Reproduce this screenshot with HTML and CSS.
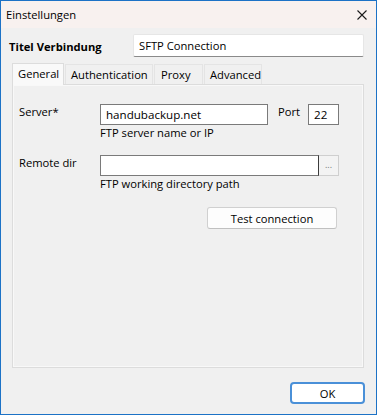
FILE: index.html
```html
<!DOCTYPE html>
<html>
<head>
<meta charset="utf-8">
<link rel="stylesheet" href="styles.css">
</head>
<body>
<div class="window">
  <div class="titlebar">
    <span class="title">Einstellungen</span>
    <svg class="close" width="10" height="10" viewBox="0 0 10 10"><path d="M0.5 0.5 L9.5 9.5 M9.5 0.5 L0.5 9.5" stroke="#1a1a1a" stroke-width="1.1" fill="none"/></svg>
  </div>
  <div class="content">
    <div class="name-row">
      <span class="name-label">Titel Verbindung</span>
      <div class="name-input">SFTP Connection</div>
    </div>
    <div class="tabs">
      <div class="tab active">General</div>
      <div class="tab">Authentication</div>
      <div class="tab">Proxy</div>
      <div class="tab">Advanced</div>
    </div>
    <div class="panel">
      <div class="form">
        <span class="label">Server*</span>
        <div class="field">
          <div class="inline">
            <div class="input server">handubackup.net</div>
            <span class="label port-label">Port</span>
            <div class="input port">22</div>
          </div>
          <div class="hint">FTP server name or IP</div>
        </div>
        <span class="label">Remote dir</span>
        <div class="field">
          <div class="inline">
            <div class="input remote"></div>
            <div class="browse">...</div>
          </div>
          <div class="hint">FTP working directory path</div>
        </div>
      </div>
      <div class="test-row">
        <button class="btn test">Test connection</button>
      </div>
    </div>
    <div class="footer">
      <button class="btn ok">OK</button>
    </div>
  </div>
</div>
</body>
</html>
```
FILE: styles.css
```css
* { box-sizing: border-box; }
html, body { margin: 0; padding: 0; }
body {
  font-family: "Open Sans", "Noto Sans", sans-serif;
  font-size: 11.2px;
  color: #000;
  background: #fff;
}
.window {
  width: 377px;
  height: 415px;
  border: 1px solid #1c72c6;
  background: #f0f0f0;
  display: flex;
  flex-direction: column;
}
.titlebar {
  height: 27px;
  background: #f8f1ef;
  display: flex;
  align-items: center;
  justify-content: space-between;
  padding: 0 9px 0 5px;
  flex-shrink: 0;
}
.title { line-height: 14px; margin-top: 1px; }
.close { display: block; }
.content {
  flex: 1;
  display: flex;
  flex-direction: column;
  padding: 6px 11px 0 11px;
}
.name-row {
  display: flex;
  align-items: center;
  height: 23px;
}
.name-label {
  font-weight: bold;
  width: 124px;
  margin-left: -3px;
  margin-top: 1px;
}
.name-input {
  width: 231px;
  height: 23px;
  background: #fff;
  border: 1px solid #e6e6e6;
  border-bottom: 1px solid #8a8a8a;
  border-radius: 2px;
  padding: 3px 5px;
  line-height: 15px;
}
.tabs {
  display: flex;
  margin-top: 6px;
  height: 21px;
  align-items: flex-end;
  position: relative;
  z-index: 1;
}
.tab {
  height: 20px;
  padding: 0 5px;
  line-height: 19px;
  background: #f0f0f0;
  border: 1px solid #e4e4e4;
  border-bottom: none;
  margin-right: 1px;
}
.tab:nth-child(2) { width: 88px; padding-left: 5px; }
.tab:nth-child(3) { width: 49px; padding-left: 6px; }
.tab:nth-child(4) { width: 58px; padding-left: 5px; }
.tab.active {
  width: 52px;
  height: 22px;
  background: #f9f9f9;
  border-color: #dcdcdc;
  margin-bottom: -1px;
  padding-left: 5px;
  line-height: 19px;
}
.panel {
  width: 352px;
  height: 284px;
  border: 1px solid #dcdcdc;
  box-shadow: inset 0 0 0 1px #f8f8f8;
  background: #f0f0f0;
  padding: 19px 0 0 6px;
  display: flex;
  flex-direction: column;
}
.form {
  display: grid;
  grid-template-columns: 81px auto;
  row-gap: 16px;
}
.label { line-height: 14px; padding-top: 1px; }
.field { display: flex; flex-direction: column; }
.inline { display: flex; align-items: flex-start; }
.input {
  height: 21px;
  background: #fff;
  border: 1px solid #7a7a7a;
  padding: 2px 5px;
  line-height: 15px;
  font-size: 11.6px;
}
.server { width: 168px; }
.port-label { margin-left: 10px; width: 30px; }
.port { width: 31px; }
.remote { width: 219px; border-right-color: #3c3c3c; }
.browse {
  width: 20px;
  height: 21px;
  background: #f3f3f3;
  border: 1px solid #cfcfcf;
  border-left: none;
  font-size: 9px;
  color: #777;
  text-align: center;
  line-height: 18px;
}
.hint { line-height: 13px; margin-top: 1px; }
.test-row {
  margin-top: 17px;
  padding-left: 188px;
}
.btn {
  font-family: inherit;
  font-size: 11.2px;
  color: #000;
  background: #fdfdfd;
  margin: 0;
}
.test {
  width: 130px;
  height: 22px;
  border: 1px solid #d0d0d0;
  border-bottom-color: #c0c0c0;
  border-radius: 3px;
  padding: 0;
}
.footer {
  display: flex;
  justify-content: flex-end;
  padding-top: 14px;
}
.ok {
  width: 75px;
  height: 22px;
  border: 2px solid #4a90d8;
  border-radius: 4px;
  padding: 0;
  background: #fff;
}
```
